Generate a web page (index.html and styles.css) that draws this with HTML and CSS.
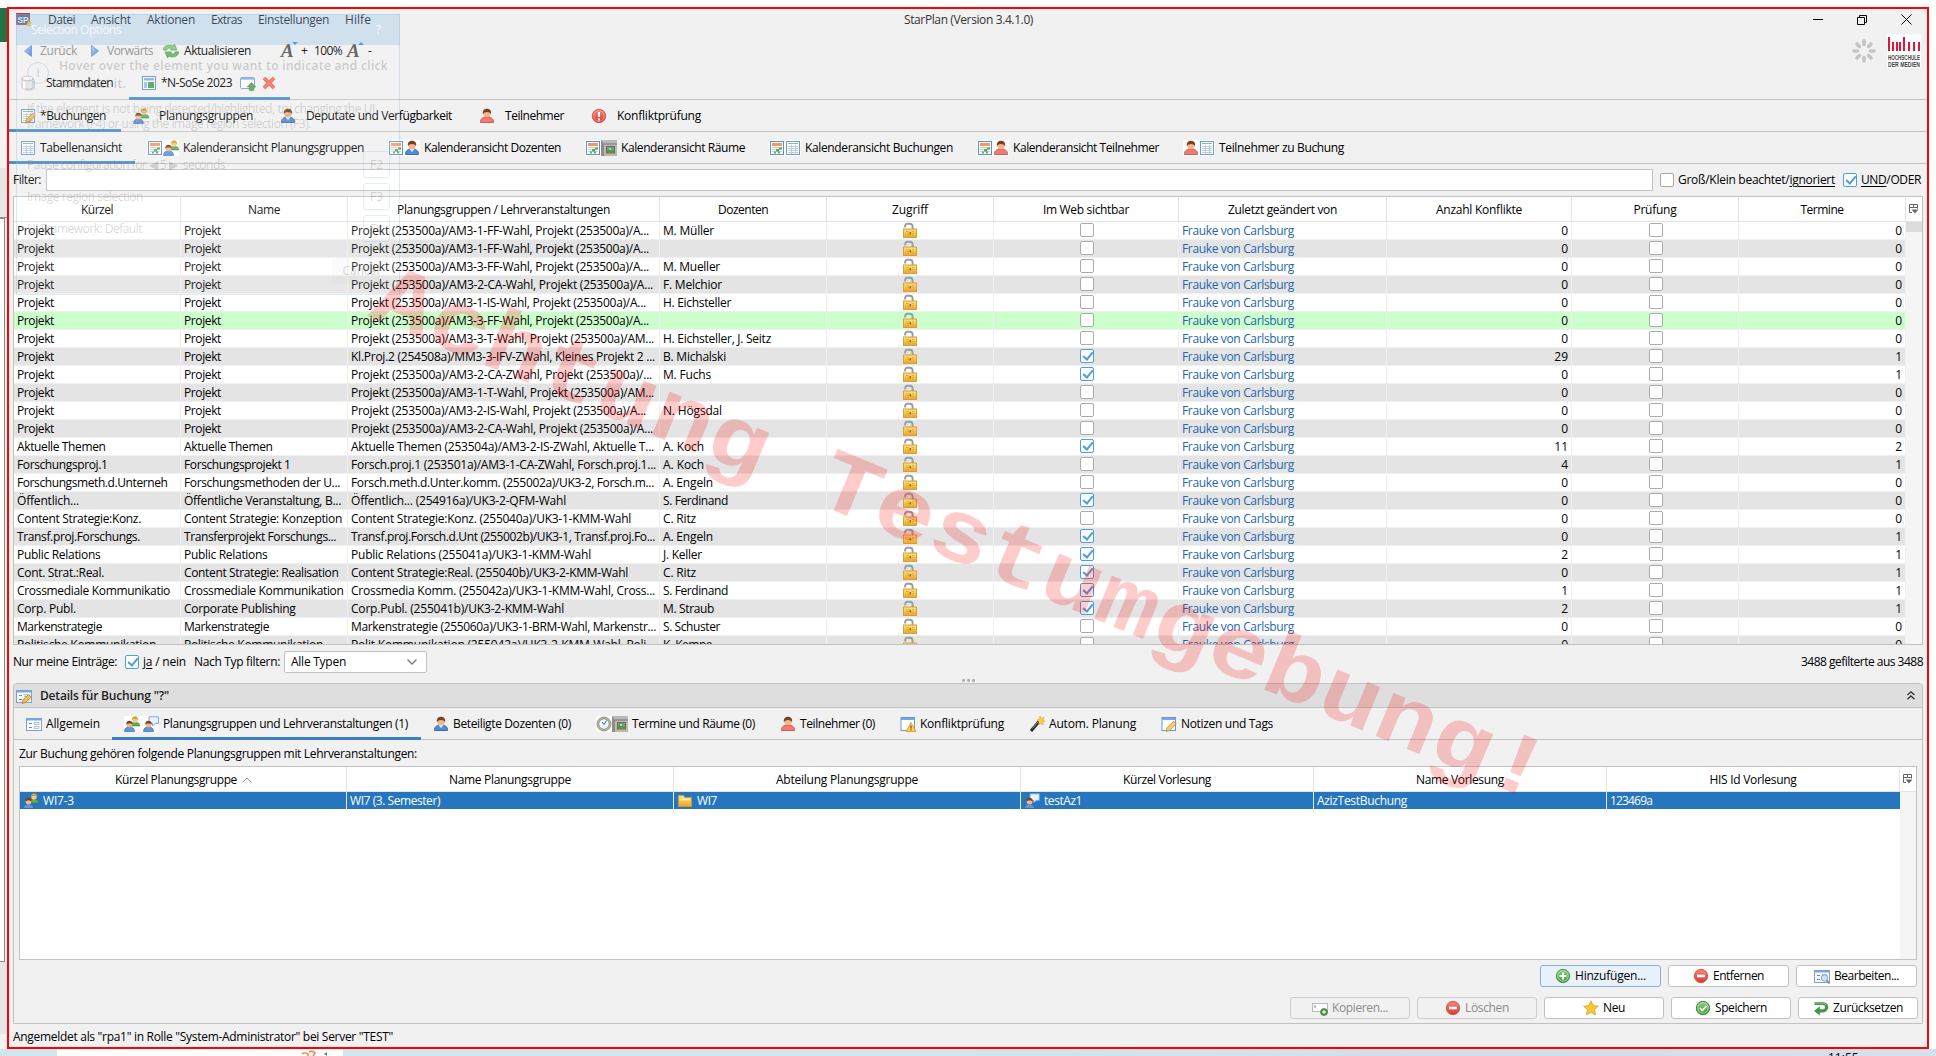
FILE: index.html
```html
<!DOCTYPE html>
<html lang="de">
<head>
<meta charset="utf-8">
<title>StarPlan</title>
<link rel="stylesheet" href="styles.css">
</head>
<body>
<svg class="defs" width="0" height="0">
  <defs>
    <linearGradient id="gold" x1="0" y1="0" x2="0" y2="1"><stop offset="0" stop-color="#fbe584"/><stop offset="1" stop-color="#eba52c"/></linearGradient>
    <linearGradient id="green" x1="0" y1="0" x2="0" y2="1"><stop offset="0" stop-color="#8fd07f"/><stop offset="1" stop-color="#3c9a3c"/></linearGradient>
    <linearGradient id="red" x1="0" y1="0" x2="0" y2="1"><stop offset="0" stop-color="#f58a7c"/><stop offset="1" stop-color="#d93a30"/></linearGradient>
    <linearGradient id="blue" x1="0" y1="0" x2="1" y2="1"><stop offset="0" stop-color="#b5d5f8"/><stop offset="1" stop-color="#3f7ed0"/></linearGradient>
  </defs>
  <symbol id="lock" viewBox="0 0 16 16"><path d="M3.200 5.400V3.800A2 2 0 0 1 5.200 1.800h2.600a2.800 2.800 0 0 1 2.800 2.800V7" fill="none" stroke="#9a9da1" stroke-width="2"/><rect x="1.500" y="7" width="13" height="8.500" fill="url(#gold)" stroke="#d69a2c" stroke-width=".9"/><path d="M4 9.500h3M4 11.500h3M4 13.500h3M10 9.500h2M10 11.500h2M10 13.500h2" stroke="#dfa838" stroke-width=".8"/><rect x="7.500" y="10" width="1.500" height="2.500" fill="#9c6a14"/></symbol>
  <symbol id="table" viewBox="0 0 16 16"><rect x="1.5" y="1.5" width="13" height="13" fill="#fff" stroke="#6f9bd8"/><path d="M3 3.5h10" stroke="#8cc382"/><path d="M3 6.5h10M3 8.5h10M3 10.5h10M3 12.5h10M6.5 5v9M10.5 5v9" stroke="#a9c2e8" stroke-width=".8"/></symbol>
  <symbol id="tableedit" viewBox="0 0 16 16"><use href="#table"/><path d="M5.500 15l1-3.800 6-6 2.800 2.800-6 6z" fill="#f4bf4f" stroke="#b87a1c" stroke-width=".8"/><path d="M12 5.700l1.200-1.300 2.600 2.600-1.200 1.300z" fill="#f0a0a0"/></symbol>
  <symbol id="cal" viewBox="0 0 16 16"><rect x="1.500" y="1.500" width="13" height="13" fill="#fff" stroke="#5f90d6"/><rect x="3" y="3" width="10" height="3" fill="#f59a55"/><path d="M3 7.500h10M3 9.500h10M3 11.500h10" stroke="#c6d2e6"/><path d="M10 7.500h3v2h-3zM7 9h3v2.500H7zM5 11.500h2v2H5zM9 11.500h2v2H9z" fill="#5daa56"/></symbol>
  <symbol id="userblue" viewBox="0 0 16 16"><path d="M1.500 14.500C1 11 4 9.500 6 9h4c2 .5 5 2 4.500 5.500z" fill="#4d8cdc" stroke="#28549c" stroke-width=".8"/><path d="M5.500 9L8 12l2.500-3z" fill="#e6f0fb"/><circle cx="8" cy="5.600" r="3.700" fill="#f0b788"/><path d="M3.900 6C3.300 2.500 5.500.8 8 .8s4.700 1.700 4.100 5.200C11 4.800 10 4 8 4S5 4.800 3.900 6z" fill="#7b431c"/></symbol>
  <symbol id="userred" viewBox="0 0 16 16"><path d="M1.500 14.500C1 11 4 9.500 6 9h4c2 .5 5 2 4.500 5.500z" fill="#f27a74" stroke="#cf4340" stroke-width=".8"/><circle cx="8" cy="5.600" r="3.700" fill="#f0b788"/><path d="M3.900 6C3.300 2.500 5.500.8 8 .8s4.700 1.700 4.100 5.200C11 4.800 10 4 8 4S5 4.800 3.900 6z" fill="#7b431c"/></symbol>
  <symbol id="group" viewBox="0 0 16 16"><path d="M7 10c0-3 2-3.500 4.500-3.500S16 7.500 15.600 10z" fill="#62b04f" stroke="#36782d" stroke-width=".6"/><circle cx="11" cy="4" r="2.700" fill="#f4c98f"/><path d="M8 4C7.800 1.500 9.500.3 11 .3S14.300 1.500 14 4c-1-1.500-5-1.500-6 0z" fill="#d9a02a"/><path d="M.6 15.500C.4 12.500 2 11 5.400 11s5.200 1.500 5 4.500z" fill="#5a97e0" stroke="#2a5aa5" stroke-width=".6"/><circle cx="5.500" cy="8.500" r="2.900" fill="#f0b788"/><path d="M2.300 8.600C2 6 3.600 4.800 5.500 4.800S9 6 8.700 8.600c-1-1.500-5.400-1.500-6.400 0z" fill="#7b431c"/></symbol>
  <symbol id="talk" viewBox="0 0 16 16"><path d="M6 .8h9.400v6.600h-3L9.500 9.800V7.400H6z" fill="#eaf3fd" stroke="#6f9bd4" stroke-width=".9"/><path d="M.6 15.500C.4 12.500 2 11 5.400 11s5.200 1.500 5 4.500z" fill="#5a97e0" stroke="#2a5aa5" stroke-width=".6"/><circle cx="5.500" cy="8.500" r="2.900" fill="#f0b788"/><path d="M2.300 8.600C2 6 3.600 4.800 5.500 4.800S9 6 8.700 8.600c-1-1.500-5.400-1.500-6.400 0z" fill="#7b431c"/></symbol>
  <symbol id="room" viewBox="0 0 16 16"><path d="M0 0h16v16H0z" fill="#b9b9b9"/><path d="M0 0l3 4v12H0z" fill="#8c8c8c"/><path d="M3 4h13" stroke="#777"/><rect x="5.500" y="6.500" width="8" height="6.500" fill="#4aa2d8" stroke="#8a6420"/><path d="M6 10l3-2 2 3 2-1v2.500H6z" fill="#49a13b"/><rect x="8" y="8" width="2" height="2" fill="#eec53b"/></symbol>
  <symbol id="excl" viewBox="0 0 16 16"><circle cx="8" cy="8" r="6.700" fill="url(#red)" stroke="#cf5a50"/><circle cx="8" cy="8" r="5.300" fill="none" stroke="#f6a79d" stroke-width=".7"/><path d="M8 4v5M8 10.500v2" stroke="#fff" stroke-width="2"/></symbol>
  <symbol id="form" viewBox="0 0 16 16"><rect x=".5" y="2.500" width="15" height="12" fill="#fff" stroke="#7a9fd6"/><path d="M1 3.500h14" stroke="#7aa5e4" stroke-width="2"/><path d="M3 7.500h3M3 11.500h3" stroke="#5f8bd0"/><path d="M8 6.500h5v2H8zM8 10.500h5v2H8z" fill="#e9f0fa" stroke="#9db8df" stroke-width=".8"/></symbol>
  <symbol id="formedit" viewBox="0 0 16 16"><use href="#form"/><path d="M6 15.500l1-3.600 5.500-5.600 2.700 2.700-5.600 5.500z" fill="#f4bf4f" stroke="#b87a1c" stroke-width=".8"/></symbol>
  <symbol id="win" viewBox="0 0 16 16"><rect x="1" y="1.500" width="13.500" height="13" fill="#fff" stroke="#6d97d3"/><path d="M1 3h13.500" stroke="#7aa5e4" stroke-width="2"/></symbol>
  <symbol id="note" viewBox="0 0 16 16"><use href="#win"/><path d="M5 15.500l1-3.600 6.500-6.600 2.700 2.700-6.600 6.500z" fill="#f4cf6f" stroke="#b88a2c" stroke-width=".8"/></symbol>
  <symbol id="warn" viewBox="0 0 16 16"><use href="#win"/><path d="M11 6.500l5 9H6z" fill="#fbd052" stroke="#d9962a" stroke-width=".8"/><path d="M11 9.500v3M11 13.300v1.200" stroke="#7a4c08" stroke-width="1.200"/></symbol>
  <symbol id="wand" viewBox="0 0 16 16"><path d="M2 15l8-9.500" stroke="#26282c" stroke-width="3"/><path d="M3.500 12.500L9 6" stroke="#8e949c"/><path d="M11 0l1 2.500L15 1l-1 3 2 1.500-2.500.5.800 3-2.600-1.800L10 8.500l-.3-3L8 4l2.300-.8z" fill="#f9cf3e" stroke="#d8991c" stroke-width=".5"/></symbol>
  <symbol id="clock" viewBox="0 0 16 16"><circle cx="8" cy="8" r="7" fill="#d8c08c" stroke="#8b7444" stroke-width=".7"/><circle cx="8" cy="8" r="5.300" fill="#f4f8fe" stroke="#5b86bd" stroke-width=".9"/><path d="M8 8.500L6 6M8 8.500l2.500-4" stroke="#345f9c"/></symbol>
  <symbol id="folder" viewBox="0 0 16 16"><path d="M1.500 13.500v-11h5l1.500 2h6.500v9z" fill="url(#gold)" stroke="#d39a2a"/><path d="M3 6.500h10" stroke="#fff3b8" stroke-width="1.500"/></symbol>
  <symbol id="plus" viewBox="0 0 16 16"><circle cx="8" cy="8" r="6.700" fill="url(#green)" stroke="#4b9b48"/><circle cx="8" cy="8" r="5.200" fill="none" stroke="#c0e6b6" stroke-width=".7"/><path d="M8 4.500v7M4.500 8h7" stroke="#fff" stroke-width="2"/></symbol>
  <symbol id="minus" viewBox="0 0 16 16"><circle cx="8" cy="8" r="6.700" fill="url(#red)" stroke="#cf5a50"/><path d="M4 8h8" stroke="#fff" stroke-width="2.600"/></symbol>
  <symbol id="ok" viewBox="0 0 16 16"><circle cx="8" cy="8" r="6.700" fill="url(#green)" stroke="#3b8c3a"/><circle cx="8" cy="8" r="5.200" fill="none" stroke="#c0e6b6" stroke-width=".7"/><path d="M5 8l2.300 2.500L11.500 6" fill="none" stroke="#fff" stroke-width="1.800"/></symbol>
  <symbol id="star" viewBox="0 0 16 16"><path d="M8 .8l2.200 4.800 5.200.6-3.900 3.500 1.100 5.200L8 12.300l-4.600 2.600 1.100-5.200L.6 6.200l5.200-.6z" fill="#f8c733" stroke="#dd9f1c" stroke-width=".8"/></symbol>
  <symbol id="undo" viewBox="0 0 16 16"><path d="M1.500 3.500H10a3.300 3.300 0 0 1 0 7.300H6" fill="none" stroke="#45954a" stroke-width="3.200"/><path d="M6.800 6.300V15.600L1 10.900z" fill="#45954a"/><path d="M2 3h8a3.500 3.500 0 0 1 3 2" fill="none" stroke="#9bd09a" stroke-width="1"/></symbol>
  <symbol id="copy" viewBox="0 0 16 16"><rect x=".5" y="3.500" width="15" height="8" fill="#fff" stroke="#b4bac2"/><path d="M3 5v3" stroke="#7c8691"/><circle cx="12" cy="12" r="3.500" fill="#4c9c3f" stroke="#2f6c28" stroke-width=".6"/><path d="M12 10v4M10 12h4" stroke="#fff"/></symbol>
  <symbol id="find" viewBox="0 0 16 16"><use href="#form"/><circle cx="10.500" cy="10" r="3.200" fill="#cfe4fb" stroke="#8ea8c9"/><path d="M12.800 12.500L15.500 15.500" stroke="#7c8694" stroke-width="1.800"/></symbol>
  <symbol id="db" viewBox="0 0 16 16"><path d="M4.500 3.500h7c2 0 3 .8 3 1.800v7.500c0 1.400-2 2.400-5 2.400s-5-1-5-2.400z" fill="#d9d9d9" stroke="#bcbcbc" stroke-width=".6"/><ellipse cx="7.500" cy="3.500" rx="5.500" ry="2.300" fill="#fafafa" stroke="#b5b5b5" stroke-width=".8"/><path d="M2 3.500V12c0 1.300 2.500 2.300 5.500 2.300S13 13.300 13 12V3.500c0 1.300-2.500 2.300-5.500 2.300S2 4.800 2 3.500z" fill="#e4e4e4" stroke="#b5b5b5" stroke-width=".8"/><path d="M4 6.500v7" stroke="#fff" stroke-width="2"/></symbol>
  <symbol id="plan" viewBox="0 0 16 16"><rect x="1.500" y="1.500" width="13" height="13" fill="#fff" stroke="#5f90d6"/><path d="M3 3h10v2.500H3z" fill="#85aee4"/><path d="M3 7h3v6H3z" fill="#9dbcea"/><path d="M7 7h6v6H7z" fill="#4ea24a"/></symbol>
  <symbol id="winup" viewBox="0 0 16 16"><rect x=".5" y="2.500" width="14" height="11" rx="1" fill="#fdfdfe" stroke="#7a9fd6"/><path d="M1 3.800h13" stroke="#86b0ea" stroke-width="1.800"/><path d="M11.500 7.500L15.800 12H13.600v3.500H9.400V12H7.200z" fill="#5aa04f" stroke="#2f7c2a" stroke-width=".5"/></symbol>
  <symbol id="cross" viewBox="0 0 16 16"><path d="M3 3l10 10M13 3L3 13" stroke="#f04e45" stroke-width="3.600"/><path d="M3 3l10 10M13 3L3 13" stroke="#ff7d72" stroke-width="1.600"/></symbol>
  <symbol id="refresh" viewBox="0 0 16 16"><path d="M.3 7C.5 3 5 .8 10 3l1.500-1.800L13.800 7H7.500l1.300-1.600C6.500 4.500 4 5.200 3.500 7.300z" fill="#86c97f" stroke="#4a9648" stroke-width=".7"/><path d="M15.700 9c-.2 4-4.700 6.200-9.700 4l-1.500 1.800L2.200 9h6.300l-1.300 1.600c2.300.9 4.800.2 5.300-1.900z" fill="#67b362" stroke="#3f8a3e" stroke-width=".7"/></symbol>
  <symbol id="cols" viewBox="0 0 10 10"><path d="M3 8.500H.5v-8h8v4M.5 3.500h8M4.500.5v3" fill="none" stroke="#666"/><path d="M2.500 5.500h7L6 9.500z" fill="#666"/></symbol>
</svg>

<div class="desktop">
  <div class="behind-left"><i class="b1"></i><i class="b2"></i><i class="b3"></i><i class="b4"></i><i class="b5"></i></div>
  <div class="taskbar"><i class="tile"></i><svg class="snip" width="40" height="7" viewBox="0 0 40 7"><path d="M2 5a4 3 0 0 1 6 0v2M9 3a4 3 0 0 1 6 1l-2 3" fill="none" stroke="#f07c4c" stroke-width="1.500"/><path d="M24 5l3-2v4z" fill="#3b9d6c"/></svg><span class="tclock">11:55</span></div>

  <main class="app">
    <header class="titlebar">
      <svg class="logo" width="17" height="14" viewBox="0 0 17 14"><rect x=".5" y=".5" width="13" height="11" fill="#46597c" stroke="#c33"/><text x="1.500" y="9.500" textLength="11" lengthAdjust="spacingAndGlyphs" class="sp">SP</text><path d="M12.500 7l1.200 2.300 2.500.3-1.800 1.700.4 2.500-2.300-1.200-2.300 1.200.5-2.500z" fill="#f3bd2e"/></svg>
      <nav class="menu"><span data-w="27">Datei</span><span data-w="40">Ansicht</span><span data-w="48">Aktionen</span><span data-w="31">Extras</span><span data-w="71">Einstellungen</span><span data-w="26">Hilfe</span></nav>
      <span class="title" data-w="129">StarPlan (Version 3.4.1.0)</span>
      <svg class="winbtns" width="100" height="12" viewBox="0 0 100 12" fill="none" stroke="#000"><path d="M0 5.500h10M44.500 3.500h7v7h-7zM46.500 3.500v-2h7v7h-2M88.500.5l10 10M98.500.5l-10 10"/></svg>
    </header>
    <div class="toolbar">
      <svg width="8" height="12" viewBox="0 0 8 12"><path d="M7.500 .5v11L.5 6z" fill="url(#blue)" stroke="#4a83cc" stroke-width=".7"/></svg>
      <span class="dim" data-w="37">Zurück</span>
      <svg class="fwd" width="8" height="12" viewBox="0 0 8 12"><path d="M.5 .5v11L7.500 6z" fill="url(#blue)" stroke="#4a83cc" stroke-width=".7"/></svg>
      <span class="dim" data-w="46">Vorwärts</span>
      <svg class="ic ref"><use href="#refresh"/></svg>
      <span data-w="67">Aktualisieren</span>
      <span class="bigA one">A<svg width="6" height="3"><path d="M0 0h6L3 3z" fill="#2c8ec4"/></svg></span>
      <span class="plus" data-w="6">+</span>
      <span class="pct" data-w="28">100%</span>
      <span class="bigA">A<svg width="6" height="3"><path d="M0 3h6L3 0z" fill="#2c8ec4"/></svg></span>
      <span class="mn">-</span>
      <svg class="spin" width="24" height="24" viewBox="-12 -12 24 24" stroke="#c4c4c4" stroke-width="3.600" stroke-linecap="round"><path d="M0-6.500V-10M0 6.500V10M-6.500 0H-10M6.500 0H10M4.600-4.600l2.400-2.400M-4.600-4.600L-7-7M4.600 4.600L7 7M-4.600 4.600L-7 7"/></svg>
      <svg class="hdm" width="34" height="34" viewBox="0 0 34 34"><path fill="#fff" d="M0 0h34v34H0z"/><path d="M2 3v14M6 8v9M10 8v9M13 8v9M17 3v14M22 8v9M27 8v9M32 8v9" stroke="#e2143a" stroke-width="2"/><text x="1" y="25.500" textLength="32" lengthAdjust="spacingAndGlyphs">HOCHSCHULE</text><text x="1" y="32.500" textLength="32" lengthAdjust="spacingAndGlyphs">DER MEDIEN</text></svg>
    </div>
    <nav class="tabs t1">
      <div class="tab"><svg class="ic"><use href="#db"/></svg><span data-w="67">Stammdaten</span></div>
      <div class="tab on"><svg class="ic"><use href="#plan"/></svg><span data-w="71">*N-SoSe 2023</span><svg class="ic up"><use href="#winup"/></svg><svg class="ic x"><use href="#cross"/></svg></div>
    </nav>
    <nav class="tabs t2">
      <div class="tab on"><svg class="ic"><use href="#tableedit"/></svg><span data-w="66">*Buchungen</span></div>
      <div class="tab"><svg class="ic"><use href="#group"/></svg><span data-w="94">Planungsgruppen</span></div>
      <div class="tab"><svg class="ic"><use href="#userblue"/></svg><span data-w="146">Deputate und Verfügbarkeit</span></div>
      <div class="tab"><svg class="ic"><use href="#userred"/></svg><span data-w="59">Teilnehmer</span></div>
      <div class="tab"><svg class="ic"><use href="#excl"/></svg><span data-w="84">Konfliktprüfung</span></div>
    </nav>
    <nav class="tabs t3">
      <div class="tab on"><svg class="ic"><use href="#table"/></svg><span data-w="82">Tabellenansicht</span></div>
      <div class="tab"><b class="pair"><svg class="ic"><use href="#cal"/></svg><svg class="ic"><use href="#group"/></svg></b><span data-w="181">Kalenderansicht Planungsgruppen</span></div>
      <div class="tab"><b class="pair"><svg class="ic"><use href="#cal"/></svg><svg class="ic"><use href="#userblue"/></svg></b><span data-w="137">Kalenderansicht Dozenten</span></div>
      <div class="tab"><b class="pair"><svg class="ic"><use href="#cal"/></svg><svg class="ic"><use href="#room"/></svg></b><span data-w="124">Kalenderansicht Räume</span></div>
      <div class="tab"><b class="pair"><svg class="ic"><use href="#cal"/></svg><svg class="ic"><use href="#table"/></svg></b><span data-w="148">Kalenderansicht Buchungen</span></div>
      <div class="tab"><b class="pair"><svg class="ic"><use href="#cal"/></svg><svg class="ic"><use href="#userred"/></svg></b><span data-w="146">Kalenderansicht Teilnehmer</span></div>
      <div class="tab"><b class="pair"><svg class="ic"><use href="#userred"/></svg><svg class="ic"><use href="#table"/></svg></b><span data-w="125">Teilnehmer zu Buchung</span></div>
    </nav>
    <div class="filter">
      <span data-w="28">Filter:</span><div class="field"></div>
      <i class="cb"></i><span data-w="157">Groß/Klein beachtet/<u>ignoriert</u></span>
      <i class="cb on"></i><span data-w="60"><u>UND</u>/ODER</span>
    </div>

    <section class="grid bookings">
      <div class="row head">
        <div><span data-w="32">Kürzel</span></div><div><span data-w="32">Name</span></div><div><span data-w="213">Planungsgruppen / Lehrveranstaltungen</span></div><div><span data-w="50">Dozenten</span></div><div><span data-w="36">Zugriff</span></div><div><span data-w="86">Im Web sichtbar</span></div><div><span data-w="109">Zuletzt geändert von</span></div><div><span data-w="86">Anzahl Konflikte</span></div><div><span data-w="43">Prüfung</span></div><div><span data-w="43">Termine</span></div><div class="pick"><svg width="10" height="10"><use href="#cols"/></svg></div>
      </div>
      <div class="body"><div class="rows" id="rows"></div><div class="track"><i></i></div></div>
    </section>

    <div class="subbar">
      <span data-w="104">Nur meine Einträge:</span><i class="cb on"></i><span data-w="43"><u>ja</u> / nein</span><span class="typ" data-w="86">Nach Typ filtern:</span>
      <div class="combo"><span data-w="55">Alle Typen</span><svg width="10" height="6" viewBox="0 0 10 6"><path d="M.5 .5L5 5 9.500 .5" fill="none" stroke="#777" stroke-width="1.300"/></svg></div>
      <span class="count" data-w="122">3488 gefilterte aus 3488</span>
    </div>
    <div class="split"><i></i><i></i><i></i></div>

    <section class="details">
      <header><svg class="ic"><use href="#formedit"/></svg><strong data-w="129">Details für Buchung "?"</strong><svg class="chev" width="8" height="9" viewBox="0 0 8 9"><path d="M.5 4L4 .8 7.500 4M.5 8.300L4 5l3.500 3.300" fill="none" stroke="#333" stroke-width="1.300"/></svg></header>
      <nav class="tabs t4">
        <div class="tab"><svg class="ic"><use href="#form"/></svg><span data-w="54">Allgemein</span></div>
        <div class="tab on"><b class="pair wide"><svg class="ic"><use href="#group"/></svg><svg class="ic"><use href="#talk"/></svg></b><span data-w="245">Planungsgruppen und Lehrveranstaltungen (1)</span></div>
        <div class="tab"><svg class="ic"><use href="#userblue"/></svg><span data-w="118">Beteiligte Dozenten (0)</span></div>
        <div class="tab"><b class="pair"><svg class="ic"><use href="#clock"/></svg><svg class="ic"><use href="#room"/></svg></b><span data-w="123">Termine und Räume (0)</span></div>
        <div class="tab"><svg class="ic"><use href="#userred"/></svg><span data-w="75">Teilnehmer (0)</span></div>
        <div class="tab"><svg class="ic"><use href="#warn"/></svg><span data-w="84">Konfliktprüfung</span></div>
        <div class="tab"><svg class="ic"><use href="#wand"/></svg><span data-w="87">Autom. Planung</span></div>
        <div class="tab"><svg class="ic"><use href="#note"/></svg><span data-w="92">Notizen und Tags</span></div>
      </nav>
      <p><span data-w="398">Zur Buchung gehören folgende Planungsgruppen mit Lehrveranstaltungen:</span></p>
      <div class="grid courses">
        <div class="row head"><div class="sorted"><span data-w="122">Kürzel Planungsgruppe</span><svg class="sort" width="10" height="6"><path d="M.5 5.500L5 1l4.500 4.500" fill="none" stroke="#999"/></svg></div><div><span data-w="122">Name Planungsgruppe</span></div><div><span data-w="142">Abteilung Planungsgruppe</span></div><div><span data-w="88">Kürzel Vorlesung</span></div><div><span data-w="88">Name Vorlesung</span></div><div><span data-w="87">HIS Id Vorlesung</span></div><div class="pick"><svg width="10" height="10"><use href="#cols"/></svg></div></div>
        <div class="body">
          <div class="rows"><div class="row sel"><div><svg class="ic"><use href="#group"/></svg><span data-w="31">WI7-3</span></div><div><span data-w="90">WI7 (3. Semester)</span></div><div><svg class="ic"><use href="#folder"/></svg><span data-w="20">WI7</span></div><div><svg class="ic"><use href="#talk"/></svg><span data-w="38">testAz1</span></div><div><span data-w="90">AzizTestBuchung</span></div><div><span data-w="42">123469a</span></div></div></div>
          <div class="track"></div>
        </div>
      </div>
      <div class="buttons a">
        <button class="hot"><svg class="ic"><use href="#plus"/></svg><span data-w="71">Hinzufügen...</span></button><button><svg class="ic"><use href="#minus"/></svg><span data-w="51">Entfernen</span></button><button><svg class="ic"><use href="#find"/></svg><span data-w="65">Bearbeiten...</span></button>
      </div>
      <div class="buttons b">
        <button disabled><svg class="ic"><use href="#copy"/></svg><span data-w="56">Kopieren...</span></button><button disabled><svg class="ic"><use href="#minus"/></svg><span data-w="44">Löschen</span></button><button><svg class="ic"><use href="#star"/></svg><span data-w="22">Neu</span></button><button><svg class="ic"><use href="#ok"/></svg><span data-w="52">Speichern</span></button><button><svg class="ic"><use href="#undo"/></svg><span data-w="70">Zurücksetzen</span></button>
      </div>
    </section>
    <footer class="status"><span data-w="380">Angemeldet als "rpa1" in Rolle "System-Administrator" bei Server "TEST"</span></footer>
  </main>

  <aside class="ghost">
    <div class="gbar"><span data-w="90">Selection Options</span><span class="q">?</span></div>
    <i class="info">i</i>
    <div class="g g1"><span data-w="329">Hover over the element you want to indicate and click</span><br><span data-w="67">to select it.</span></div>
    <div class="g g2"><span data-w="348">If the element is not being detected/highlighted, try changing the UI</span><br><span data-w="284">framework (F4) or using the image region selection (F3).</span></div>
    <div class="g g3"><span data-w="198">Pause configuration for ◀ 5 ▶ &nbsp;seconds</span></div>
    <div class="g g4"><span data-w="116">Image region selection</span></div>
    <div class="g g5"><span data-w="115">UI Framework: Default</span></div>
    <i class="key k2">F2</i><i class="key k3">F3</i><i class="key k4">F4</i>
    <span class="cancel">Cancel</span>
  </aside>
  <div class="watermark">Achtung Testumgebung!</div>
</div>
<script src="script.js"></script>
</body>
</html>
```

FILE: styles.css
```css
* { box-sizing: border-box; }
body { margin: 0; background: #fff; font: 12px/16px "Open Sans", "Noto Sans", sans-serif; color: #000; overflow: hidden; }
.defs { position: absolute; }
.desktop { position: relative; width: 1936px; height: 1056px; overflow: hidden; }
[data-w] { display: inline-block; white-space: pre; }
.ic { width: 16px; height: 16px; flex: none; display: block; }
u { text-decoration: underline; text-underline-offset: 2px; }

/* neighbouring window and taskbar */
.behind-left { position: absolute; left: 0; top: 8px; width: 7px; height: 1041px; display: flex; flex-direction: column; background: #f3f2f1; }
.behind-left i { display: block; }
.b1 { height: 34px; background: #217346; }
.b2 { height: 126px; }
.b3 { height: 50px; background: #e6e6e6; border-bottom: 1px solid #999; }
.b4 { height: 744px; background: #fff; border: 1px solid #888; border-left: 0; width: 5px; }
.b5 { height: 72px; background: #e6e6e6; }
.taskbar { position: absolute; left: 0; top: 1049px; width: 1936px; height: 7px; background: linear-gradient(90deg, #cfe6ee 0, #cfe6ee 50%, #d3deeb 75%, #d6e0ec 100%); overflow: hidden; }
.tile { position: absolute; left: 57px; top: 0; width: 286px; height: 7px; background: #fff; }
.snip { position: absolute; left: 300px; top: 0; }
.tclock { position: absolute; left: 1828px; top: 1px; }

.app { position: absolute; left: 7px; top: 7px; width: 1922px; height: 1042px; border: 2px solid #f00; background: #f1f1f1; display: flex; flex-direction: column; }

.titlebar { height: 26px; padding: 0 14px 4px 7px; display: flex; align-items: center; flex: none; }
.logo { margin-right: 15px; }
.sp { font: bold 9px "Liberation Sans", sans-serif; fill: #fff; }
.menu { display: flex; gap: 16px; }
.title { margin-left: 533px; color: #333; }
.winbtns { margin-left: auto; }

.toolbar { height: 31px; display: flex; align-items: center; padding: 1px 6px 0 15px; flex: none; }
.toolbar > svg:first-child { margin-right: 8px; }
.dim { color: #8b8b8b; }
.fwd { margin: 0 8px 0 14px; }
.ref { margin: 0 5px 0 10px; }
.bigA { font: italic bold 19px/20px "Liberation Serif", serif; color: #555; width: 18px; position: relative; margin-left: 5px; }
.bigA.one { margin-left: 30px; }
.bigA svg { position: absolute; right: 1px; top: 1px; }
.plus { margin-left: 2px; }
.pct { margin-left: 7px; }
.mn { margin-left: 3px; }
.spin { margin-left: auto; margin-right: 11px; }
.hdm text { font: bold 6.500px "Liberation Sans", sans-serif; fill: #444; }

.tabs { height: 32px; flex: none; display: flex; border-bottom: 1px solid #c2c2c2; }
.tab { display: flex; align-items: center; gap: 4px; position: relative; height: 32px; padding: 0 12px; }
.tab.on::after { content: ""; position: absolute; left: 0; right: 0; bottom: 0; height: 3px; background: #4c8dcb; }
.pair { display: flex; background: #fff; }
.wide { gap: 3px; }
.tabs.t1 { height: 34px; }
.t1 .tab { height: 34px; padding: 0 16px 0 11px; }
.t1 .tab:first-child { gap: 10px; }
.t1 .tab.on { padding: 0 13px 0 12px; }
.up { margin-left: 4px; }
.x { margin-left: 1px; }
.t2 .tab { gap: 10px; padding: 0 13px 0 14px; }
.t2 .tab.on { gap: 4px; padding: 0 15px 0 11px; margin-right: -2px; }
.t3 .tab:first-child { padding: 0 13px 0 11px; }

.filter { height: 32px; flex: none; display: flex; align-items: center; padding: 0 6px 0 4px; }
.field { width: 1607px; height: 22px; margin: 0 7px 0 5px; background: #fff; border: 1px solid #c2c2c2; }
.cb { width: 14px; height: 14px; flex: none; background: #fff; border: 1px solid #aaa; border-radius: 2px; position: relative; display: block; }
.cb.on { border-color: #4e9de0; }
.cb.on::after { content: ""; position: absolute; left: 4px; top: 0; width: 4px; height: 8px; border: solid #4e9de0; border-width: 0 2px 2px 0; transform: rotate(40deg); }
.filter .cb { margin-right: 4px; }
.filter [data-w="157"] { margin-right: 8px; }

.grid { background: #fff; border: 1px solid #c2c2c2; display: flex; flex-direction: column; flex: none; }
.bookings { height: 449px; margin: 0 4px; overflow: hidden; }
.bookings .row { display: grid; grid-template-columns: 167px 167px 312px 167px 167px 185px 208px 185px 167px 167px; }
.bookings .head { grid-template-columns: 167px 167px 312px 167px 167px 185px 208px 185px 167px 167px 16px; }
.head { height: 25px; flex: none; border-bottom: 1px solid #e4e4e4; }
.head > div { display: flex; align-items: center; justify-content: center; border-right: 1px solid #e4e4e4; padding-top: 1px; position: relative; }
.head > div.pick { border: 0; padding: 0 0 1px; }
.body { display: flex; flex: 1; min-height: 0; overflow: hidden; }
.track { flex: 1; background: #f5f5f5; }
.track i { display: block; height: 10px; background: #dcdcdc; }
.rows .row { height: 18px; line-height: 17px; }
.rows .row > div { border-right: 1px solid #f0f0f0; border-bottom: 1px solid #f0f0f0; padding: 0 3px; overflow: hidden; white-space: nowrap; }
.rows .row:nth-child(even) > div { background: #e4e4e4; }
.rows .row.green > div { background: #ccffcc; }
.rows .row > .mid { display: flex; justify-content: center; padding: 0; }
.mid .cb { margin-top: 1px; margin-left: 2px; }
.rows .row > .num { text-align: right; }
.who { color: #2566ae; }

.subbar { height: 34px; flex: none; display: flex; align-items: center; padding: 0 4px; }
.subbar .cb { margin: 0 4px 0 8px; }
.typ { margin-left: 8px; }
.combo { width: 143px; height: 22px; margin-left: 4px; padding: 0 9px 0 6px; background: #fff; border: 1px solid #c2c2c2; border-radius: 2px; display: flex; align-items: center; justify-content: space-between; }
.count { margin-left: auto; }
.split { height: 4px; flex: none; display: flex; gap: 2px; justify-content: center; }
.split i { width: 3px; height: 3px; background: #b0b0b0; border-radius: 1px; }

.details { height: 341px; margin: 0 4px; border: 1px solid #c2c2c2; border-radius: 4px 4px 0 0; flex: none; }
.details > header { height: 24px; display: flex; align-items: center; background: #dedede; border-bottom: 1px solid #c2c2c2; padding: 0 7px 0 2px; border-radius: 3px 3px 0 0; }
.details strong { margin-left: 8px; font-weight: 600; color: #222; }
.chev { margin-left: auto; }
.t4 .tab.on::after { background: #3a80c4; }
.t4 .tab { padding-right: 13px; }
.t4 .tab:first-child { padding-right: 12px; }
.details p { margin: 0; height: 26px; padding: 6px 5px 0; }
.courses { height: 194px; margin: 0 5px; }
.courses .row { display: grid; grid-template-columns: 327px 327px 347px 293px 293px 293px 16px; }
.courses .head > .sorted { padding-right: 14px; }
.rows .row.sel { grid-template-columns: 327px 327px 347px 293px 293px 293px; height: 17px; }
.rows .row.sel > div { background: #2675bf; border-bottom: 0; color: #fff; display: flex; align-items: center; gap: 4px; line-height: 16px; border-right-color: #e8e8e8; }
.courses .rows .row > div:last-child { border-right: 0; }
.sort { position: absolute; left: 222px; top: 10px; }
.buttons { display: flex; justify-content: flex-end; gap: 7px; padding: 10px 4px 0; }
.buttons.a { padding: 5px 5px 0; }
button { width: 121px; height: 22px; padding: 0; font: inherit; color: #000; background: #fff; border: 1px solid #c2c2c2; border-radius: 3px; display: flex; align-items: center; justify-content: center; gap: 4px; }
.b button { width: 120px; }
button.hot { background: #e9f2fb; border-color: #89b0d4; }
button:disabled { background: #f1f1f1; color: #8c8c8c; border-color: #cdcdcd; }
.status { padding: 5px 4px 0; }

/* dialog that is fading out over the window */
.ghost { position: absolute; left: 16px; top: 14px; width: 384px; height: 281px; background: rgba(255,255,255,.12); border: 1px solid rgba(120,170,215,.25); color: rgba(90,90,90,.24); }
.gbar { height: 31px; margin: -1px; padding: 8px 19px 0 15px; background: rgba(125,180,225,.28); color: rgba(255,255,255,.8); display: flex; justify-content: space-between; }
.g { position: absolute; left: 10px; white-space: nowrap; }
.g1 { left: 42px; top: 42px; font-weight: 600; line-height: 18px; color: rgba(80,80,80,.26); }
.g2 { top: 86px; line-height: 15px; }
.g3 { top: 142px; }
.g4 { top: 174px; }
.g5 { top: 206px; }
.info { position: absolute; left: 10px; top: 47px; width: 22px; height: 22px; border: 1.500px solid rgba(90,150,210,.25); border-radius: 50%; text-align: center; line-height: 19px; font-style: normal; color: rgba(90,150,210,.4); }
.key { position: absolute; left: 346px; width: 27px; height: 27px; border: 1px solid rgba(110,170,225,.2); border-radius: 3px; text-align: center; line-height: 25px; font-style: normal; }
.k2 { top: 136px; }
.k3 { top: 168px; }
.k4 { top: 200px; }
.cancel { position: absolute; left: 315px; top: 243px; width: 58px; height: 26px; line-height: 26px; text-align: center; background: rgba(200,200,200,.08); }
.watermark { position: absolute; left: 367px; top: 239px; width: 1300px; height: 100px; font: bold 100.500px/100px "Courier New", "Liberation Mono", monospace; white-space: pre; color: rgba(255,0,0,.2); transform-origin: 0 77px; transform: rotate(22.600deg) scaleY(.88); }
```

FILE: script.js
```js
const P = ['Projekt', 37, 'Projekt', 37];
const bookings = [
  [...P, 'Projekt (253500a)/AM3-1-FF-Wahl, Projekt (253500a)/A...', 298, 'M. Müller', 51, 0, 0, 0],
  [...P, 'Projekt (253500a)/AM3-1-FF-Wahl, Projekt (253500a)/A...', 298, '', 0, 0, 0, 0],
  [...P, 'Projekt (253500a)/AM3-3-FF-Wahl, Projekt (253500a)/A...', 298, 'M. Mueller', 57, 0, 0, 0],
  [...P, 'Projekt (253500a)/AM3-2-CA-Wahl, Projekt (253500a)/A...', 302, 'F. Melchior', 59, 0, 0, 0],
  [...P, 'Projekt (253500a)/AM3-1-IS-Wahl, Projekt (253500a)/A...', 295, 'H. Eichsteller', 68, 0, 0, 0],
  [...P, 'Projekt (253500a)/AM3-3-FF-Wahl, Projekt (253500a)/A...', 298, '', 0, 0, 0, 0, 'green'],
  [...P, 'Projekt (253500a)/AM3-3-T-Wahl, Projekt (253500a)/AM...', 303, 'H. Eichsteller, J. Seitz', 108, 0, 0, 0],
  [...P, 'Kl.Proj.2 (254508a)/MM3-3-IFV-ZWahl, Kleines Projekt 2 ...', 304, 'B. Michalski', 63, 1, 29, 1],
  [...P, 'Projekt (253500a)/AM3-2-CA-ZWahl, Projekt (253500a)/...', 301, 'M. Fuchs', 48, 1, 0, 1],
  [...P, 'Projekt (253500a)/AM3-1-T-Wahl, Projekt (253500a)/AM...', 303, '', 0, 0, 0, 0],
  [...P, 'Projekt (253500a)/AM3-2-IS-Wahl, Projekt (253500a)/A...', 295, 'N. Högsdal', 59, 0, 0, 0],
  [...P, 'Projekt (253500a)/AM3-2-CA-Wahl, Projekt (253500a)/A...', 302, '', 0, 0, 0, 0],
  ['Aktuelle Themen', 88.5, 'Aktuelle Themen', 88.5, 'Aktuelle Themen (253504a)/AM3-2-IS-ZWahl, Aktuelle T...', 303, 'A. Koch', 41, 1, 11, 2],
  ['Forschungsproj.1', 90.5, 'Forschungsprojekt 1', 106.5, 'Forsch.proj.1 (253501a)/AM3-1-CA-ZWahl, Forsch.proj.1...', 305, 'A. Koch', 41, 0, 4, 1],
  ['Forschungsmeth.d.Unterneh', 150.5, 'Forschungsmethoden der U...', 156, 'Forsch.meth.d.Unter.komm. (255002a)/UK3-2, Forsch.m...', 303, 'A. Engeln', 50, 0, 0, 0],
  ['Öffentlich...', 62, 'Öffentliche Veranstaltung, B...', 157, 'Öffentlich... (254916a)/UK3-2-QFM-Wahl', 215, 'S. Ferdinand', 65, 1, 0, 0],
  ['Content Strategie:Konz.', 124, 'Content Strategie: Konzeption', 158, 'Content Strategie:Konz. (255040a)/UK3-1-KMM-Wahl', 280, 'C. Ritz', 33, 0, 0, 0],
  ['Transf.proj.Forschungs.', 123, 'Transferprojekt Forschungs...', 152, 'Transf.proj.Forsch.d.Unt (255002b)/UK3-1, Transf.proj.Fo...', 304, 'A. Engeln', 50, 1, 0, 1],
  ['Public Relations', 83.5, 'Public Relations', 83.5, 'Public Relations (255041a)/UK3-1-KMM-Wahl', 240, 'J. Keller', 39, 1, 2, 1],
  ['Cont. Strat.:Real.', 87, 'Content Strategie: Realisation', 154.5, 'Content Strategie:Real. (255040b)/UK3-2-KMM-Wahl', 277, 'C. Ritz', 33, 1, 0, 1],
  ['Crossmediale Kommunikatio', 153, 'Crossmediale Kommunikation', 159.5, 'Crossmedia Komm. (255042a)/UK3-1-KMM-Wahl, Cross...', 304, 'S. Ferdinand', 65, 1, 1, 1],
  ['Corp. Publ.', 59, 'Corporate Publishing', 111.5, 'Corp.Publ. (255041b)/UK3-2-KMM-Wahl', 213, 'M. Straub', 51, 1, 2, 1],
  ['Markenstrategie', 85, 'Markenstrategie', 85, 'Markenstrategie (255060a)/UK3-1-BRM-Wahl, Markenstr...', 305, 'S. Schuster', 57, 0, 0, 0],
  ['Politische Kommunikation', 139, 'Politische Kommunikation', 139, 'Polit.Kommunikation (255042a)/UK3-2-KMM-Wahl, Poli...', 304, 'K. Kempe', 49, 0, 0, 0],
];

const text = (t, w) => `<div>${t ? `<span data-w="${w}">${t}</span>` : ''}</div>`;
const box = on => `<div class="mid"><i class="cb${on ? ' on' : ''}"></i></div>`;

document.getElementById('rows').innerHTML = bookings.map(b => `<div class="row ${b[11] || ''}">`
  + text(b[0], b[1]) + text(b[2], b[3]) + text(b[4], b[5]) + text(b[6], b[7])
  + '<div class="mid"><svg class="ic"><use href="#lock"/></svg></div>'
  + box(b[8]) + '<div class="who"><span data-w="112">Frauke von Carlsburg</span></div>'
  + `<div class="num">${b[9]}</div>` + box(0) + `<div class="num">${b[10]}</div></div>`).join('');

document.querySelectorAll('[data-w]').forEach(el => {
  const want = +el.dataset.w;
  const natural = el.getBoundingClientRect().width;
  const n = el.textContent.length;
  el.style.letterSpacing = ((want - natural) / n).toFixed(3) + 'px';
  el.style.width = want + 'px';
});
```
